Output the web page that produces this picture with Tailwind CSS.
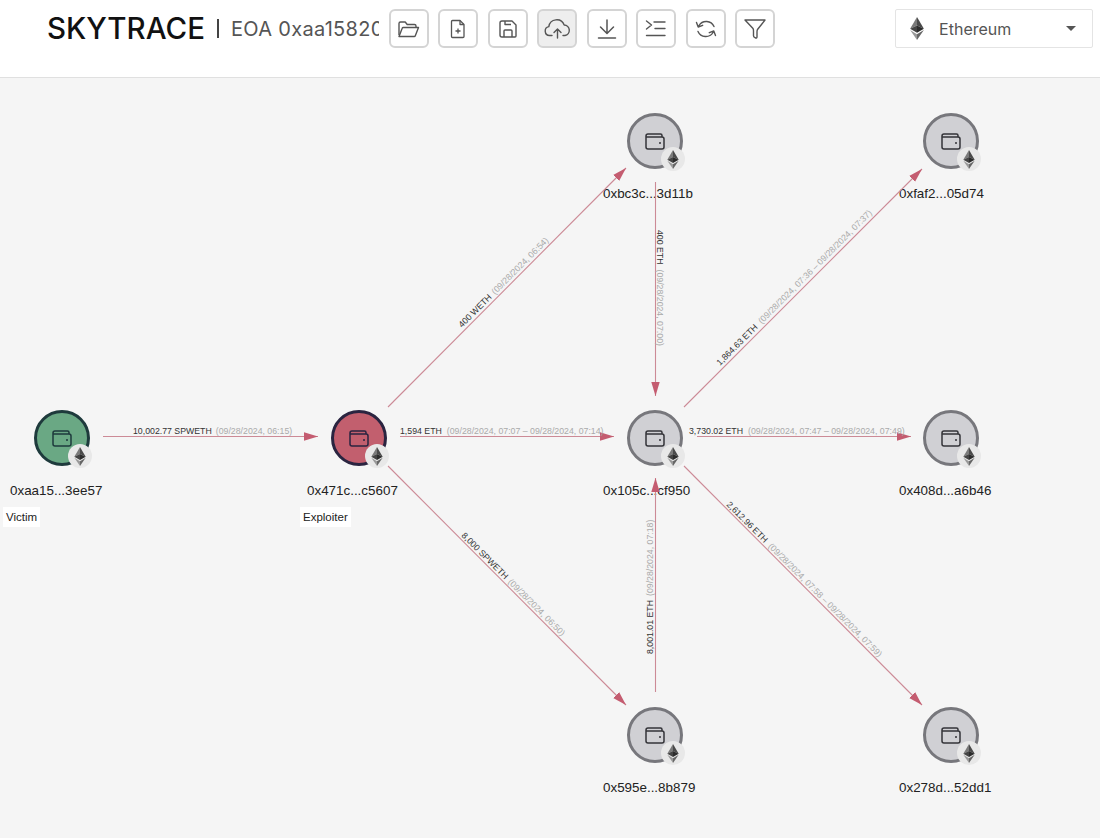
<!DOCTYPE html>
<html lang="en">
<head>
  <meta charset="UTF-8" />
  <title>Skytrace</title>
  <script src="https://cdn.jsdelivr.net/npm/@tailwindcss/browser@4"></script>
</head>
<body class="bg-white [font-family:'Liberation_Sans',sans-serif]">

  <!-- shared icons -->
  <svg class="hidden">
    <symbol id="eth" viewBox="0 0 12 20">
      <polygon points="6,0 0,10.2 6,7.4" fill="#7a7a7a" />
      <polygon points="6,0 12,10.2 6,7.4" fill="#4a4a4a" />
      <polygon points="6,7.4 0,10.2 6,13.7" fill="#444444" />
      <polygon points="6,7.4 12,10.2 6,13.7" fill="#2c2c2c" />
      <polygon points="0,11.4 6,20 6,15" fill="#999999" />
      <polygon points="12,11.4 6,20 6,15" fill="#666666" />
    </symbol>
    <symbol id="wallet" viewBox="0 0 20 17">
      <path d="M17 4V2.500A1.500 1.500 0 0 0 15.500 1H3A2 2 0 0 0 1 3v11a2 2 0 0 0 2 2h14a2 2 0 0 0 2-2V6a2 2 0 0 0-2-2H1.600" fill="none" stroke="currentColor" stroke-width="1.500" stroke-linejoin="round" />
      <circle cx="15" cy="10" r="1" fill="currentColor" />
    </symbol>
  </svg>

  <div class="w-[1100px] h-[838px] flex flex-col overflow-hidden">

    <!-- Header -->
    <header class="h-[78px] shrink-0 bg-white border-b border-[#e0e0e0] flex items-start pl-[47px] pt-[9px]">
      <h1 class="text-[29.500px] leading-[38px] font-medium text-[#111] [font-family:Inter,sans-serif] w-[166px]">SKYTRACE</h1>
      <div class="w-[2px] h-[19px] bg-[#444] mt-[10px] ml-[4px]"></div>
      <div class="w-[148px] ml-[12px] mr-[10px] overflow-hidden whitespace-nowrap text-[20px] leading-[40px] tracking-[0.300px] text-[#555] [font-family:Inter,sans-serif]">EOA 0xaa1582084c4f588ef9e</div>

      <div class="flex gap-[9.450px]">
        <button class="w-[40px] h-[39px] rounded-md border-2 border-[#d4d4d4] bg-white flex items-center justify-center text-[#555]">
          <svg width="24" height="24" viewBox="0 0 24 24" fill="none" stroke="currentColor" stroke-width="1.400" stroke-linejoin="round"><path d="M2 18V6.500A1.500 1.500 0 0 1 3.500 5h4.700l2 2.500h7.300A1.500 1.500 0 0 1 19 9v1.500" /><path d="M2 19.500l3.200-8.200a1.200 1.200 0 0 1 1.100-.8h15.200l-3.200 8.200a1.200 1.200 0 0 1-1.100.8z" /></svg>
        </button>
        <button class="w-[40px] h-[39px] rounded-md border-2 border-[#d4d4d4] bg-white flex items-center justify-center text-[#555]">
          <svg width="22" height="22" viewBox="0 0 22 22" fill="none" stroke="currentColor" stroke-width="1.300" stroke-linejoin="round"><path d="M5.500 2.500h7.500l4 4v12a1 1 0 0 1-1 1H5.500a1 1 0 0 1-1-1v-15a1 1 0 0 1 1-1z" /><path d="M13 2.500v4h4M11 10.500v5M8.500 13h5" /></svg>
        </button>
        <button class="w-[40px] h-[39px] rounded-md border-2 border-[#d4d4d4] bg-white flex items-center justify-center text-[#555]">
          <svg width="22" height="22" viewBox="0 0 22 22" fill="none" stroke="currentColor" stroke-width="1.400" stroke-linejoin="round"><path d="M5 3h10l4 4v11a1 1 0 0 1-1 1H5a2 2 0 0 1-2-2V5a2 2 0 0 1 2-2z" /><path d="M7 19v-6a1 1 0 0 1 1-1h6a1 1 0 0 1 1 1v6M8 3v3.500h6" /></svg>
        </button>
        <button class="w-[40px] h-[39px] rounded-md border-2 border-[#d4d4d4] bg-[#eeeeee] flex items-center justify-center text-[#555]">
          <svg width="28" height="24" viewBox="0 0 28 24" fill="none" stroke="currentColor" stroke-width="1.400" stroke-linecap="round" stroke-linejoin="round"><path d="M9 18.500H6.500a4.500 4.500 0 0 1-.7-8.900A8 8 0 0 1 21.200 8a5.300 5.300 0 0 1 .8 10.500h-2" /><path d="M14.500 21v-9M11 15.500l3.500-3.500 3.500 3.500" /></svg>
        </button>
        <button class="w-[40px] h-[39px] rounded-md border-2 border-[#d4d4d4] bg-white flex items-center justify-center text-[#555]">
          <svg width="24" height="24" viewBox="0 0 24 24" fill="none" stroke="currentColor" stroke-width="1.500" stroke-linecap="round" stroke-linejoin="round"><path d="M12 3v13M5.500 10l6.500 6.500 6.500-6.500M3.500 21h17" /></svg>
        </button>
        <button class="w-[40px] h-[39px] rounded-md border-2 border-[#d4d4d4] bg-white flex items-center justify-center text-[#555]">
          <svg width="24" height="24" viewBox="0 0 24 24" fill="none" stroke="currentColor" stroke-width="1.400" stroke-linecap="round" stroke-linejoin="round"><path d="M2.500 4l5 4-5 4M10 5h11M11 11.500h10M2.500 18.500h18.500" /></svg>
        </button>
        <button class="w-[40px] h-[39px] rounded-md border-2 border-[#d4d4d4] bg-white flex items-center justify-center text-[#555]">
          <svg width="24" height="24" viewBox="0 0 24 24" fill="none" stroke="currentColor" stroke-width="1.400" stroke-linecap="round" stroke-linejoin="round"><path d="M2.500 5.500l1.700 4.500 4.500-1.700M20 9.500A8.500 8.500 0 0 0 5 8.500L4.200 10M21.500 18.500l-1.700-4.500-4.500 1.700M4 14.500a8.500 8.500 0 0 0 15 1l.8-1.500" /></svg>
        </button>
        <button class="w-[40px] h-[39px] rounded-md border-2 border-[#d4d4d4] bg-white flex items-center justify-center text-[#555]">
          <svg width="24" height="24" viewBox="0 0 24 24" fill="none" stroke="currentColor" stroke-width="1.400" stroke-linejoin="round"><path d="M2 3h20l-7.500 9.500c-.6.800-.5 2-.5 3V20a1 1 0 0 1-1.300 1l-.7-.3c-1-.4-1.500-1-1.500-2v-4.200c0-1 .1-2.200-.5-3z" /></svg>
        </button>
      </div>

      <div class="ml-[120px] w-[198px] h-[39px] border border-[#e4e4e4] bg-white flex items-center pl-[14px] pr-[16px] rounded-[2px] text-[16px] text-[#555] [font-family:Inter,sans-serif]">
        <svg width="14" height="23"><use href="#eth" /></svg>
        <span class="ml-[15px] flex-1">Ethereum</span>
        <span class="w-0 h-0 border-x-[5px] border-x-transparent border-t-[5px] border-t-[#555]"></span>
      </div>
    </header>

    <!-- Graph canvas -->
    <div id="canvas" class="relative flex-1 bg-[#f5f5f5]">
      <svg class="absolute inset-0 z-10 pointer-events-none" width="1100" height="760" viewBox="0 78 1100 760">
        <defs>
          <marker id="head" markerUnits="userSpaceOnUse" markerWidth="15" markerHeight="10" refX="14" refY="5" orient="auto">
            <polygon points="0,0.800 14,5 0,9.200" fill="#c45c70" />
          </marker>
        </defs>
        <g stroke="#cc8a96" stroke-width="1.100" fill="none">
          <line x1="103" y1="436.500" x2="318" y2="436.500" marker-end="url(#head)" />
          <line x1="400" y1="436.500" x2="614" y2="436.500" marker-end="url(#head)" />
          <line x1="697" y1="436.500" x2="911" y2="436.500" marker-end="url(#head)" />
          <line x1="388" y1="407" x2="626" y2="168" marker-end="url(#head)" />
          <line x1="655.500" y1="182" x2="655.500" y2="396" marker-end="url(#head)" />
          <line x1="684" y1="407" x2="922" y2="169" marker-end="url(#head)" />
          <line x1="388" y1="466" x2="626" y2="705" marker-end="url(#head)" />
          <line x1="655.500" y1="692" x2="655.500" y2="478" marker-end="url(#head)" />
          <line x1="684" y1="466" x2="922" y2="705" marker-end="url(#head)" />
        </g>
        <g font-size="8.750" fill="#333">
          <text x="133" y="434">10,002.77 SPWETH<tspan dx="4" fill="#aaa">(09/28/2024, 06:15)</tspan></text>
          <text x="400" y="434">1,594 ETH<tspan dx="5" fill="#aaa">(09/28/2024, 07:07 – 09/28/2024, 07:14)</tspan></text>
          <text x="689" y="434">3,730.02 ETH<tspan dx="5" fill="#aaa">(09/28/2024, 07:47 – 09/28/2024, 07:49)</tspan></text>
          <text transform="translate(462 328) rotate(-45)">400 WETH<tspan dx="4" fill="#aaa">(09/28/2024, 06:54)</tspan></text>
          <text transform="translate(657 230) rotate(90)">400 ETH<tspan dx="5" fill="#aaa">(09/28/2024, 07:00)</tspan></text>
          <text transform="translate(720 366) rotate(-45)">1,864.63 ETH<tspan dx="5" fill="#aaa">(09/28/2024, 07:36 – 09/28/2024, 07:37)</tspan></text>
          <text transform="translate(461 536) rotate(45)">8,000 SPWETH<tspan dx="4" fill="#aaa">(09/28/2024, 06:50)</tspan></text>
          <text transform="translate(653 654) rotate(-90)">8,001.01 ETH<tspan dx="4" fill="#aaa">(09/28/2024, 07:18)</tspan></text>
          <text transform="translate(726 505) rotate(45)">2,612.96 ETH<tspan dx="5" fill="#aaa">(09/28/2024, 07:58 – 09/28/2024, 07:59)</tspan></text>
        </g>
      </svg>
      <!-- nodes are injected here -->
    </div>
  </div>

  <script>
    const TOP = 78;
    const nodes = [
      { x: 62, y: 438, addr: "0xaa15...3ee57", tag: "Victim", cls: "bg-[#6aa884] border-[#1e3a3c] text-[#1e3a3c]" },
      { x: 359, y: 438, addr: "0x471c...c5607", tag: "Exploiter", cls: "bg-[#c25f6e] border-[#2a2440] text-[#2a2440]" },
      { x: 655, y: 141, addr: "0xbc3c...3d11b" },
      { x: 951, y: 141, addr: "0xfaf2...05d74" },
      { x: 655, y: 438, addr: "0x105c...cf950" },
      { x: 951, y: 438, addr: "0x408d...a6b46" },
      { x: 655, y: 735, addr: "0x595e...8b879" },
      { x: 951, y: 735, addr: "0x278d...52dd1" },
    ];

    const canvas = document.getElementById("canvas");
    nodes.forEach((n) => {
      const el = document.createElement("div");
      el.className = "absolute w-[56px] h-[56px]";
      el.style.left = n.x - 28 + "px";
      el.style.top = n.y - 28 - TOP + "px";
      const look = n.cls || "bg-[#d0d0d4] border-[#77777c] text-[#333338]";
      el.innerHTML = `
        <div class="w-full h-full rounded-full border-[3px] flex items-center justify-center ${look}">
          <svg width="20" height="17"><use href="#wallet" /></svg>
        </div>
        <div class="absolute left-[34px] top-[34px] w-[24px] h-[24px] rounded-full bg-[#e8e8e8] flex items-center justify-center">
          <svg width="12" height="19"><use href="#eth" /></svg>
        </div>
        <div class="absolute left-[-24px] top-[73px] text-[13.400px] leading-[16px] whitespace-nowrap text-[#222]">${n.addr}</div>
        ${n.tag ? `<div class="absolute left-[-31px] top-[97px] px-[3px] h-[20px] leading-[20px] bg-white text-[11.500px] text-[#222] whitespace-nowrap">${n.tag}</div>` : ""}
      `;
      canvas.appendChild(el);
    });
  </script>
</body>
</html>
